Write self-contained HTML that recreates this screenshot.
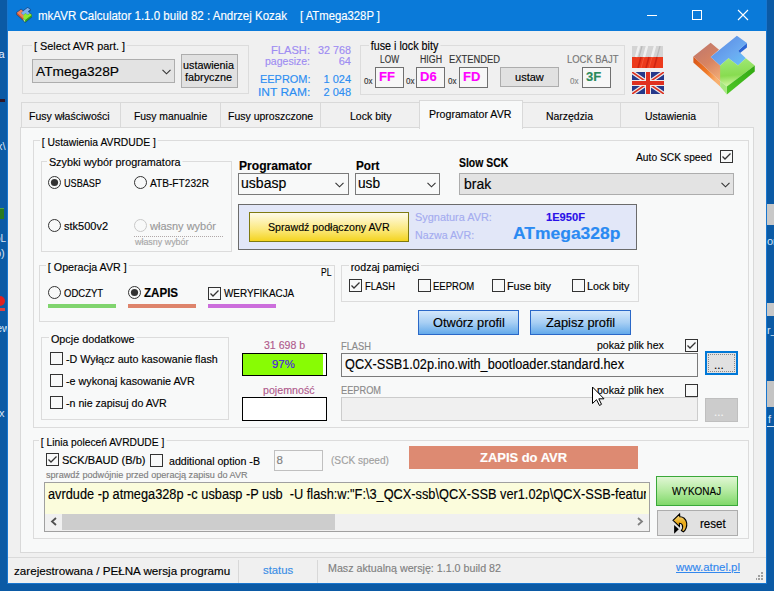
<!DOCTYPE html><html><head><meta charset="utf-8"><style>
html,body{margin:0;padding:0;width:774px;height:591px;overflow:hidden;background:#0b5aa5;font-family:"Liberation Sans", sans-serif;}
.a{position:absolute;box-sizing:border-box;}
.t{position:absolute;white-space:nowrap;line-height:1;transform-origin:0 0;-webkit-text-stroke:0.15px currentColor;}
svg{position:absolute;}
</style></head><body>
<div class="a" style="left:0;top:0;width:7px;height:591px;overflow:hidden">
<div class="t" style="left:-4px;top:49px;font-size:11px;color:#e8f0ff;-webkit-text-stroke:0">la</div>
<div class="a" style="left:0;top:99px;width:5px;height:3px;background:#301828"></div>
<div class="t" style="left:-1px;top:408px;font-size:11px;color:#d8e4f4;-webkit-text-stroke:0">x</div>
<div class="t" style="left:-3px;top:141px;font-size:11px;color:#d8e4f4;-webkit-text-stroke:0">x\</div>
<div class="a" style="left:0;top:208px;width:4px;height:11px;background:#2a7a20;border-top:1px solid #50a040"></div>
<div class="t" style="left:-5px;top:234px;font-size:10px;color:#d8e4f4;-webkit-text-stroke:0">oL</div>
<div class="t" style="left:-5px;top:248px;font-size:11px;color:#d8e4f4;-webkit-text-stroke:0">b)</div>
<div class="a" style="left:0;top:296px;width:5px;height:10px;background:#e02020;border-radius:0 5px 5px 0"></div>
<div class="a" style="left:0;top:308px;width:5px;height:3px;background:#e04040"></div>
<div class="t" style="left:-4px;top:323px;font-size:11px;color:#d8e4f4;-webkit-text-stroke:0">ew</div>
</div>
<div class="a" style="left:767px;top:0;width:7px;height:591px;overflow:hidden">
<div class="a" style="left:0;top:204px;width:7px;height:21px;background:#c8c8c8"></div>
<div class="t" style="left:0;top:236px;font-size:11px;color:#d8e4f4;-webkit-text-stroke:0">or</div>
<div class="a" style="left:0;top:303px;width:7px;height:13px;background:#c8c8c8"></div>
<div class="t" style="left:0;top:325px;font-size:11px;color:#d8e4f4;-webkit-text-stroke:0">r_</div>
<div class="a" style="left:0;top:381px;width:7px;height:26px;background:#c4c4c4"></div>
<div class="t" style="left:1px;top:414px;font-size:11px;color:#d8e4f4;-webkit-text-stroke:0">f</div>
<div class="a" style="left:0;top:426px;width:7px;height:1px;background:#d8e4f4"></div>
</div>
<div class="a" style="left:7px;top:0px;width:760px;height:584px;background:#1876cf;"></div>
<div class="a" style="left:8px;top:0px;width:758px;height:31px;background:#0a7ad9;"></div>
<div class="a" style="left:8px;top:31px;width:758px;height:552px;background:#f0f0f0;"></div>
<svg style="left:15.7px;top:7px" width="16.8" height="16.3" viewBox="0 0 609 591">
<polygon points="30,210 185,88 260,150 420,25 510,90 510,130 440,185 500,225 580,290 580,345 330,550 270,480 30,265" fill="#1a3a70" stroke="#1a3a70" stroke-width="45" stroke-linejoin="round" opacity="0.75"/>
<polygon points="30,210 270,430 270,480 30,265" fill="#e85018"/>
<polygon points="185,88 260,150 185,215 270,290 330,340 270,430 30,210" fill="#f08058"/>
<polygon points="185,215 420,25 510,90 430,160 500,225 430,290 345,225 270,290" fill="#7ab0f0"/>
<polygon points="270,290 345,225 430,290 500,225 580,290 330,480 270,430" fill="#90e830"/>
<polygon points="330,480 580,290 580,345 330,550" fill="#30b010"/>
<polygon points="270,430 330,480 330,550 270,480" fill="#c0f080"/>
</svg>
<div class="a" style="left:647px;top:15px;width:10px;height:1px;background:#ffffff;"></div>
<div class="a" style="left:692px;top:10px;width:10px;height:10px;border:1px solid #ffffff;"></div>
<svg style="left:737px;top:9px" width="12" height="12" viewBox="0 0 12 12"><path d="M1 1 L11 11 M11 1 L1 11" stroke="#fff" stroke-width="1.1"/></svg>
<div class="t" id="t0" style="left:38.00px;top:10.30px;font-size:12.5px;color:#fff;transform:scaleX(0.9221);">mkAVR Calculator 1.1.0 build 82 : Andrzej Kozak</div>
<div class="t" id="t1" style="left:300.00px;top:10.30px;font-size:12.5px;color:#fff;transform:scaleX(0.9041);">[ ATmega328P ]</div>
<div class="a" style="left:22px;top:45px;width:227px;height:49px;background:transparent;border:1px solid #dcdcdc;"></div>
<div class="t" id="t2" style="left:32.00px;top:41.30px;font-size:11.5px;color:#000;background:#f0f0f0;padding:0 2px;transform:scaleX(0.9470);">[ Select AVR part. ]</div>
<div class="a" style="left:32px;top:59px;width:143px;height:24px;background:#e3e3e3;border:1px solid #adadad;"></div>
<div class="t" id="t3" style="left:36.00px;top:65.30px;font-size:13px;color:#000;transform:scaleX(1.0569);">ATmega328P</div>
<svg style="left:162px;top:69px" width="9" height="6" viewBox="0 0 9 6"><path d="M0.5 0.8 L4.5 4.8 L8.5 0.8" stroke="#333" stroke-width="1.1" fill="none"/></svg>
<div class="a" style="left:181px;top:54px;width:57px;height:34px;background:#e1e1e1;border:1px solid #adadad;"></div>
<div class="t" id="t4" style="left:183.00px;top:60.30px;font-size:11.5px;color:#000;transform:scaleX(0.9385);">ustawienia</div>
<div class="t" id="t5" style="left:185.00px;top:72.30px;font-size:11.5px;color:#000;transform:scaleX(0.9427);">fabryczne</div>
<div class="t" id="t6" style="left:271.00px;top:45.30px;font-size:10.5px;color:#9e8cf2;transform:scaleX(1.0608);">FLASH:</div>
<div class="t" id="t7" style="left:318.00px;top:45.30px;font-size:10.5px;color:#9e8cf2;transform:scaleX(1.0272);">32 768</div>
<div class="t" id="t8" style="left:265.00px;top:56.30px;font-size:11px;color:#9e8cf2;transform:scaleX(0.9555);">pagesize:</div>
<div class="t" id="t9" style="left:338.75px;top:56.30px;font-size:11px;color:#9e8cf2;">64</div>
<div class="t" id="t10" style="left:259.50px;top:74.30px;font-size:11px;color:#2c8ef2;transform:scaleX(0.9954);">EEPROM:</div>
<div class="t" id="t11" style="left:323.47px;top:74.30px;font-size:11px;color:#2c8ef2;">1 024</div>
<div class="t" id="t12" style="left:257.70px;top:87.00px;font-size:11px;color:#2c8ef2;transform:scaleX(1.0878);">INT RAM:</div>
<div class="t" id="t13" style="left:323.47px;top:87.00px;font-size:11px;color:#2c8ef2;">2 048</div>
<div class="a" style="left:360px;top:45px;width:265px;height:50px;background:transparent;border:1px solid #dcdcdc;"></div>
<div class="t" id="t14" style="left:369.00px;top:40.30px;font-size:12.5px;color:#000;background:#f0f0f0;padding:0 2px;transform:scaleX(0.8604);">fuse i lock bity</div>
<div class="t" id="t15" style="left:380.00px;top:55.30px;font-size:10px;color:#333;transform:scaleX(0.8340);">LOW</div>
<div class="t" id="t16" style="left:420.00px;top:55.30px;font-size:10px;color:#333;transform:scaleX(0.8800);">HIGH</div>
<div class="t" id="t17" style="left:448.50px;top:55.30px;font-size:10px;color:#333;transform:scaleX(0.9366);">EXTENDED</div>
<div class="t" id="t18" style="left:566.60px;top:55.30px;font-size:10px;color:#777;transform:scaleX(0.9437);">LOCK BAJT</div>
<div class="a" style="left:375px;top:67px;width:29px;height:21px;background:#f7f7f7;border:1px solid #707070;"></div>
<div class="t" id="t19" style="left:379.00px;top:70.30px;font-size:13px;color:#ff00ff;font-weight:bold;">FF</div>
<div class="t" id="t20" style="left:363.50px;top:77.30px;font-size:9px;color:#333;transform:scaleX(0.8933);">0x</div>
<div class="a" style="left:416px;top:67px;width:29px;height:21px;background:#f7f7f7;border:1px solid #707070;"></div>
<div class="t" id="t21" style="left:420.00px;top:70.30px;font-size:13px;color:#ff00ff;font-weight:bold;">D6</div>
<div class="t" id="t22" style="left:406.00px;top:77.30px;font-size:9px;color:#333;transform:scaleX(0.8933);">0x</div>
<div class="a" style="left:459px;top:67px;width:29px;height:21px;background:#f7f7f7;border:1px solid #707070;"></div>
<div class="t" id="t23" style="left:463.00px;top:70.30px;font-size:13px;color:#ff00ff;font-weight:bold;">FD</div>
<div class="t" id="t24" style="left:448.00px;top:77.30px;font-size:9px;color:#333;transform:scaleX(0.8933);">0x</div>
<div class="a" style="left:582px;top:67px;width:29px;height:21px;background:#f7f7f7;border:1px solid #707070;"></div>
<div class="t" id="t25" style="left:586.00px;top:70.30px;font-size:13px;color:#2a8a5a;font-weight:bold;">3F</div>
<div class="t" id="t26" style="left:570.00px;top:77.30px;font-size:9px;color:#888;transform:scaleX(0.8933);">0x</div>
<div class="a" style="left:500px;top:67px;width:59px;height:20px;background:#e1e1e1;border:1px solid #adadad;"></div>
<div class="t" id="t27" style="left:514.70px;top:72.30px;font-size:11.5px;color:#000;transform:scaleX(0.9585);">ustaw</div>
<svg style="left:632px;top:46px" width="31" height="22" viewBox="0 0 31 22">
<rect x="0" y="0" width="31" height="11" fill="#d4d4d4"/><rect x="0" y="11" width="31" height="11" fill="#ec3a1c"/>
<path d="M7 0 L4 11 M15 0 L12 11 M23 0 L20 11" stroke="#f4f4f4" stroke-width="2.5" opacity="0.9"/>
<path d="M10 0 L7 11 M28 0 L25 11" stroke="#a8a8a8" stroke-width="1.2" opacity="0.6"/>
<path d="M9 11 L6 22 M17 11 L14 22 M25 11 L22 22" stroke="#b81408" stroke-width="1.6" opacity="0.55"/>
<path d="M12 11 L9 22 M20 11 L17 22" stroke="#ff7050" stroke-width="1" opacity="0.5"/>
</svg>
<svg style="left:632px;top:72px" width="32" height="22" viewBox="0 0 32 22">
<rect width="32" height="22" fill="#26388a"/>
<path d="M0 0 L32 22 M32 0 L0 22" stroke="#ececec" stroke-width="4"/>
<path d="M0 0 L32 22 M32 0 L0 22" stroke="#dc3020" stroke-width="1.6"/>
<rect x="13" y="0" width="6" height="22" fill="#ececec"/><rect x="0" y="8" width="32" height="6" fill="#ececec"/>
<rect x="14" y="0" width="4" height="22" fill="#e03020"/><rect x="0" y="9" width="32" height="4" fill="#e03020"/>
</svg>
<svg style="left:690px;top:33px" width="68" height="66" viewBox="0 0 609 591">
<defs>
<linearGradient id="go" x1="0.2" y1="0" x2="0.8" y2="1"><stop offset="0" stop-color="#c0786c"/><stop offset="0.5" stop-color="#d88462"/><stop offset="1" stop-color="#f4b078"/></linearGradient>
<linearGradient id="gof" x1="0" y1="0" x2="1" y2="0.3"><stop offset="0" stop-color="#d85418"/><stop offset="0.6" stop-color="#f07a28"/><stop offset="1" stop-color="#f8b070"/></linearGradient>
<linearGradient id="gg" x1="0.3" y1="0" x2="0.4" y2="1"><stop offset="0" stop-color="#a0e878"/><stop offset="0.6" stop-color="#88dc50"/><stop offset="1" stop-color="#d8f8a8"/></linearGradient>
<linearGradient id="ggf" x1="0" y1="1" x2="1" y2="0"><stop offset="0" stop-color="#50c828"/><stop offset="1" stop-color="#30a810"/></linearGradient>
<linearGradient id="gb" x1="0" y1="0" x2="1" y2="1"><stop offset="0" stop-color="#5884e0"/><stop offset="0.6" stop-color="#6aa8f0"/><stop offset="1" stop-color="#68c4f8"/></linearGradient>
</defs>
<polygon points="30,210 270,430 270,480 30,265" fill="url(#gof)"/>
<polygon points="185,88 260,150 185,215 270,290 330,340 270,430 30,210" fill="url(#go)"/>
<polygon points="510,90 510,130 440,185 430,160" fill="#2a64d4"/>
<polygon points="185,215 420,25 510,90 430,160 500,225 430,290 345,225 270,290" fill="url(#gb)"/>
<polygon points="270,290 345,225 430,290 500,225 580,290 330,480 270,430" fill="url(#gg)"/>
<polygon points="330,480 580,290 580,345 330,550" fill="url(#ggf)"/>
<polygon points="270,430 330,480 330,550 270,480" fill="#a8e880"/>
</svg>
<div class="a" style="left:21px;top:102px;width:100px;height:26px;background:#f0f0f0;border:1px solid #d9d9d9;"></div>
<div class="t" id="t28" style="left:29.40px;top:111.30px;font-size:11.5px;color:#000;transform:scaleX(0.9140);">Fusy właściwości</div>
<div class="a" style="left:120px;top:102px;width:101px;height:26px;background:#f0f0f0;border:1px solid #d9d9d9;"></div>
<div class="t" id="t29" style="left:133.80px;top:111.30px;font-size:11.5px;color:#000;transform:scaleX(0.9016);">Fusy manualnie</div>
<div class="a" style="left:220px;top:102px;width:101px;height:26px;background:#f0f0f0;border:1px solid #d9d9d9;"></div>
<div class="t" id="t30" style="left:227.80px;top:111.30px;font-size:11.5px;color:#000;transform:scaleX(0.9129);">Fusy uproszczone</div>
<div class="a" style="left:320px;top:102px;width:100px;height:26px;background:#f0f0f0;border:1px solid #d9d9d9;"></div>
<div class="t" id="t31" style="left:349.50px;top:111.30px;font-size:11.5px;color:#000;transform:scaleX(0.9143);">Lock bity</div>
<div class="a" style="left:522px;top:102px;width:99px;height:26px;background:#f0f0f0;border:1px solid #d9d9d9;"></div>
<div class="t" id="t32" style="left:546.00px;top:111.30px;font-size:11.5px;color:#000;transform:scaleX(0.9077);">Narzędzia</div>
<div class="a" style="left:620px;top:102px;width:99px;height:26px;background:#f0f0f0;border:1px solid #d9d9d9;"></div>
<div class="t" id="t33" style="left:644.60px;top:111.30px;font-size:11.5px;color:#000;transform:scaleX(0.9067);">Ustawienia</div>
<div class="a" style="left:20px;top:127px;width:734px;height:426px;background:#f8f9f9;border:1px solid #d9d9d9;"></div>
<div class="a" style="left:419px;top:100px;width:104px;height:29px;background:#f8f9f9;border:1px solid #d9d9d9;border-bottom:none;"></div>
<div class="t" id="t34" style="left:428.60px;top:109.30px;font-size:11.5px;color:#000;transform:scaleX(0.9231);">Programator AVR</div>
<div class="a" style="left:33px;top:140px;width:716px;height:288px;background:transparent;border:1px solid #dcdcdc;"></div>
<div class="t" id="t35" style="left:39.60px;top:136.80px;font-size:11.5px;color:#000;background:#f8f9f9;padding:0 2px;transform:scaleX(0.8987);">[ Ustawienia AVRDUDE ]</div>
<div class="a" style="left:41px;top:161px;width:191px;height:91px;background:transparent;border:1px solid #dcdcdc;"></div>
<div class="t" id="t36" style="left:46.60px;top:157.30px;font-size:11.5px;color:#000;background:#f8f9f9;padding:0 2px;transform:scaleX(0.9404);">Szybki wybór programatora</div>
<svg style="left:48px;top:176px" width="13" height="13" viewBox="0 0 13 13"><circle cx="6.5" cy="6.5" r="6" fill="#f8f9f9" stroke="#333333" stroke-width="1"/><circle cx="6.5" cy="6.5" r="3.6" fill="#333"/></svg>
<div class="t" id="t37" style="left:64.00px;top:177.60px;font-size:11.5px;color:#000;transform:scaleX(0.7928);">USBASP</div>
<svg style="left:134px;top:176px" width="13" height="13" viewBox="0 0 13 13"><circle cx="6.5" cy="6.5" r="6" fill="#f8f9f9" stroke="#333333" stroke-width="1"/></svg>
<div class="t" id="t38" style="left:150.00px;top:177.60px;font-size:11.5px;color:#000;transform:scaleX(0.8820);">ATB-FT232R</div>
<svg style="left:48px;top:219px" width="13" height="13" viewBox="0 0 13 13"><circle cx="6.5" cy="6.5" r="6" fill="#f8f9f9" stroke="#333333" stroke-width="1"/></svg>
<div class="t" id="t39" style="left:63.70px;top:221.30px;font-size:11.5px;color:#000;transform:scaleX(0.9559);">stk500v2</div>
<svg style="left:134px;top:219px" width="13" height="13" viewBox="0 0 13 13"><circle cx="6.5" cy="6.5" r="6" fill="#f8f9f9" stroke="#c8c8c8" stroke-width="1"/></svg>
<div class="t" id="t40" style="left:150.00px;top:220.80px;font-size:11.5px;color:#9a9a9a;transform:scaleX(0.9561);">własny wybór</div>
<div class="a" style="left:134px;top:236px;width:89px;height:1px;border-top:1px dotted #b0a8a8"></div>
<div class="t" id="t41" style="left:134.50px;top:237.30px;font-size:9.5px;color:#a8a8a8;transform:scaleX(0.9381);">własny wybór</div>
<div class="t" id="t42" style="left:239.40px;top:160.10px;font-size:12px;color:#000;font-weight:bold;transform:scaleX(1.0079);">Programator</div>
<div class="a" style="left:238px;top:173px;width:111px;height:22px;background:#f8f9f9;border:1px solid #7a7a7a;"></div>
<div class="t" id="t43" style="left:241.30px;top:176.30px;font-size:14px;color:#000;transform:scaleX(1.0032);">usbasp</div>
<svg style="left:335px;top:182px" width="9" height="6" viewBox="0 0 9 6"><path d="M0.5 0.8 L4.5 4.8 L8.5 0.8" stroke="#333" stroke-width="1.1" fill="none"/></svg>
<div class="t" id="t44" style="left:355.50px;top:160.10px;font-size:12px;color:#000;font-weight:bold;transform:scaleX(0.9792);">Port</div>
<div class="a" style="left:355px;top:173px;width:85px;height:22px;background:#f8f9f9;border:1px solid #7a7a7a;"></div>
<div class="t" id="t45" style="left:358.20px;top:176.30px;font-size:14px;color:#000;transform:scaleX(0.9788);">usb</div>
<svg style="left:427px;top:182px" width="9" height="6" viewBox="0 0 9 6"><path d="M0.5 0.8 L4.5 4.8 L8.5 0.8" stroke="#333" stroke-width="1.1" fill="none"/></svg>
<div class="t" id="t46" style="left:459.30px;top:157.10px;font-size:12px;color:#000;font-weight:bold;transform:scaleX(0.8682);">Slow SCK</div>
<div class="a" style="left:459px;top:173px;width:275px;height:22px;background:#e3e3e3;border:1px solid #adadad;"></div>
<div class="t" id="t47" style="left:463.50px;top:176.70px;font-size:14px;color:#000;transform:scaleX(0.9987);">brak</div>
<svg style="left:721px;top:182px" width="9" height="6" viewBox="0 0 9 6"><path d="M0.5 0.8 L4.5 4.8 L8.5 0.8" stroke="#333" stroke-width="1.1" fill="none"/></svg>
<div class="t" id="t48" style="left:636.00px;top:152.00px;font-size:11.5px;color:#000;transform:scaleX(0.8938);">Auto SCK speed</div>
<div class="a" style="left:720px;top:150px;width:13px;height:13px;background:#f8f9f9;border:1px solid #333333;"><svg style="left:0;top:0" width="11" height="11" viewBox="0 0 11 11"><path d="M1.5 5.5 L4 8 L9.5 2.5" stroke="#333" stroke-width="1.3" fill="none"/></svg></div>
<div class="a" style="left:238px;top:204px;width:399px;height:46px;background:#e2e7f8;border:1px solid #6b6b6b;"></div>
<div class="a" style="left:249px;top:212px;width:160px;height:30px;border:1px solid #7f7a10;background:linear-gradient(#fffbe8,#fbe87a 60%,#f4d420);"></div>
<div class="t" id="t49" style="left:267.70px;top:222.30px;font-size:11.5px;color:#000;transform:scaleX(0.9248);">Sprawdź podłączony AVR</div>
<div class="t" id="t50" style="left:414.50px;top:212.30px;font-size:11.5px;color:#a4acf0;transform:scaleX(0.9496);">Sygnatura AVR:</div>
<div class="t" id="t51" style="left:414.50px;top:230.30px;font-size:11.5px;color:#a4acf0;transform:scaleX(0.9277);">Nazwa AVR:</div>
<div class="t" id="t52" style="left:546.00px;top:212.30px;font-size:11px;color:#2a10e8;font-weight:bold;transform:scaleX(1.0122);">1E950F</div>
<div class="t" id="t53" style="left:512.60px;top:226.00px;font-size:16px;color:#2a8af2;font-weight:bold;transform:scaleX(1.0914);">ATmega328p</div>
<div class="a" style="left:39px;top:265px;width:296px;height:57px;background:transparent;border:1px solid #dcdcdc;"></div>
<div class="t" id="t54" style="left:45.80px;top:261.60px;font-size:11.5px;color:#000;background:#f8f9f9;padding:0 2px;transform:scaleX(0.9302);">[ Operacja AVR ]</div>
<div class="t" id="t55" style="left:320.60px;top:267.30px;font-size:11px;color:#000;transform:scaleX(0.7722);">PL</div>
<svg style="left:48px;top:286px" width="13" height="13" viewBox="0 0 13 13"><circle cx="6.5" cy="6.5" r="6" fill="#f8f9f9" stroke="#333333" stroke-width="1"/></svg>
<div class="t" id="t56" style="left:63.80px;top:287.80px;font-size:11.5px;color:#000;transform:scaleX(0.8270);">ODCZYT</div>
<div class="a" style="left:48px;top:304px;width:68px;height:4px;background:#80d46e;"></div>
<svg style="left:128px;top:286px" width="13" height="13" viewBox="0 0 13 13"><circle cx="6.5" cy="6.5" r="6" fill="#f8f9f9" stroke="#333333" stroke-width="1"/><circle cx="6.5" cy="6.5" r="3.6" fill="#333"/></svg>
<div class="t" id="t57" style="left:144.20px;top:286.80px;font-size:12px;color:#000;font-weight:bold;transform:scaleX(0.9648);">ZAPIS</div>
<div class="a" style="left:128px;top:304px;width:68px;height:4px;background:#de846c;"></div>
<div class="a" style="left:208px;top:287px;width:13px;height:13px;background:#f8f9f9;border:1px solid #333333;"><svg style="left:0;top:0" width="11" height="11" viewBox="0 0 11 11"><path d="M1.5 5.5 L4 8 L9.5 2.5" stroke="#333" stroke-width="1.3" fill="none"/></svg></div>
<div class="t" id="t58" style="left:223.80px;top:287.80px;font-size:11.5px;color:#000;transform:scaleX(0.8605);">WERYFIKACJA</div>
<div class="a" style="left:208px;top:304px;width:68px;height:4px;background:#cc6edc;"></div>
<div class="a" style="left:341px;top:265px;width:298px;height:37px;background:transparent;border:1px solid #dcdcdc;"></div>
<div class="t" id="t59" style="left:348.80px;top:261.80px;font-size:11.5px;color:#000;background:#f8f9f9;padding:0 2px;transform:scaleX(0.9212);">rodzaj pamięci</div>
<div class="a" style="left:349px;top:279px;width:13px;height:13px;background:#f8f9f9;border:1px solid #333333;"><svg style="left:0;top:0" width="11" height="11" viewBox="0 0 11 11"><path d="M1.5 5.5 L4 8 L9.5 2.5" stroke="#333" stroke-width="1.3" fill="none"/></svg></div>
<div class="t" id="t60" style="left:364.80px;top:281.30px;font-size:11.5px;color:#000;transform:scaleX(0.8118);">FLASH</div>
<div class="a" style="left:418px;top:279px;width:13px;height:13px;background:#f8f9f9;border:1px solid #333333;"></div>
<div class="t" id="t61" style="left:433.30px;top:281.30px;font-size:11.5px;color:#000;transform:scaleX(0.8266);">EEPROM</div>
<div class="a" style="left:492px;top:279px;width:13px;height:13px;background:#f8f9f9;border:1px solid #333333;"></div>
<div class="t" id="t62" style="left:507.00px;top:281.30px;font-size:11.5px;color:#000;transform:scaleX(0.9428);">Fuse bity</div>
<div class="a" style="left:572px;top:279px;width:13px;height:13px;background:#f8f9f9;border:1px solid #333333;"></div>
<div class="t" id="t63" style="left:586.70px;top:281.30px;font-size:11.5px;color:#000;transform:scaleX(0.9363);">Lock bity</div>
<div class="a" style="left:418px;top:310px;width:101px;height:25px;border:1px solid #2a68c8;background:linear-gradient(#d4e8fb,#a8cff4 50%,#64aaea);"></div>
<div class="t" id="t64" style="left:432.50px;top:316.30px;font-size:13px;color:#000;transform:scaleX(0.9840);">Otwórz profil</div>
<div class="a" style="left:530px;top:310px;width:101px;height:25px;border:1px solid #2a68c8;background:linear-gradient(#d4e8fb,#a8cff4 50%,#64aaea);"></div>
<div class="t" id="t65" style="left:545.50px;top:316.30px;font-size:13px;color:#000;transform:scaleX(0.9875);">Zapisz profil</div>
<div class="a" style="left:41px;top:337px;width:188px;height:83px;background:transparent;border:1px solid #dcdcdc;"></div>
<div class="t" id="t66" style="left:49.40px;top:333.60px;font-size:11.5px;color:#000;background:#f8f9f9;padding:0 2px;transform:scaleX(0.9410);">Opcje dodatkowe</div>
<div class="a" style="left:50px;top:352px;width:13px;height:13px;background:#f8f9f9;border:1px solid #333333;"></div>
<div class="t" id="t67" style="left:66.30px;top:353.90px;font-size:11.5px;color:#000;transform:scaleX(0.9313);">-D Wyłącz auto kasowanie flash</div>
<div class="a" style="left:50px;top:374px;width:13px;height:13px;background:#f8f9f9;border:1px solid #333333;"></div>
<div class="t" id="t68" style="left:65.50px;top:375.90px;font-size:11.5px;color:#000;transform:scaleX(0.9336);">-e wykonaj kasowanie AVR</div>
<div class="a" style="left:50px;top:396px;width:13px;height:13px;background:#f8f9f9;border:1px solid #333333;"></div>
<div class="t" id="t69" style="left:65.50px;top:397.90px;font-size:11.5px;color:#000;transform:scaleX(0.9229);">-n nie zapisuj do AVR</div>
<div class="t" id="t70" style="left:264.20px;top:340.00px;font-size:11px;color:#b05a8c;transform:scaleX(0.9596);">31 698 b</div>
<div class="a" style="left:242px;top:353px;width:85px;height:23px;background:#ffffff;border:1px solid #000000;"></div>
<div class="a" style="left:243px;top:354px;width:80px;height:21px;background:#88fc04;"></div>
<div class="t" id="t71" style="left:271.80px;top:359.10px;font-size:11.5px;color:#4a14e0;transform:scaleX(0.9900);">97%</div>
<div class="t" id="t72" style="left:263.40px;top:384.90px;font-size:11px;color:#b05a8c;transform:scaleX(0.9699);">pojemność</div>
<div class="a" style="left:242px;top:397px;width:85px;height:24px;background:#ffffff;border:1px solid #000000;"></div>
<div class="t" id="t73" style="left:341.00px;top:341.10px;font-size:10.5px;color:#8a8a8a;transform:scaleX(0.8864);">FLASH</div>
<div class="a" style="left:341px;top:353px;width:357px;height:24px;background:#f8f9f9;border:1px solid #7a7a7a;"></div>
<div class="t" id="t74" style="left:345.00px;top:357.30px;font-size:14px;color:#000;transform:scaleX(0.9075);">QCX-SSB1.02p.ino.with_bootloader.standard.hex</div>
<div class="t" id="t75" style="left:597.40px;top:340.30px;font-size:11.5px;color:#000;transform:scaleX(0.9166);">pokaż plik hex</div>
<div class="a" style="left:685px;top:339px;width:13px;height:13px;background:#f8f9f9;border:1px solid #333333;"><svg style="left:0;top:0" width="11" height="11" viewBox="0 0 11 11"><path d="M1.5 5.5 L4 8 L9.5 2.5" stroke="#333" stroke-width="1.3" fill="none"/></svg></div>
<div class="a" style="left:705px;top:351px;width:33px;height:24px;background:#e1e1e1;border:1px solid #0078d7;border-width:2px;"><div class="a" style="left:1px;top:1px;right:1px;bottom:1px;border:1px dotted #8a8a8a"></div></div>
<div class="t" id="t76" style="left:714.00px;top:360.30px;font-size:11.5px;color:#000;">...</div>
<div class="t" id="t77" style="left:341.00px;top:385.30px;font-size:10.5px;color:#8a8a8a;transform:scaleX(0.8788);">EEPROM</div>
<div class="a" style="left:341px;top:397px;width:357px;height:24px;background:#f0f0f0;border:1px solid #cccccc;"></div>
<div class="t" id="t78" style="left:597.40px;top:385.30px;font-size:11.5px;color:#000;transform:scaleX(0.9166);">pokaż plik hex</div>
<div class="a" style="left:685px;top:384px;width:13px;height:13px;background:#f8f9f9;border:1px solid #333333;"></div>
<div class="a" style="left:705px;top:398px;width:33px;height:24px;background:#cccccc;border:1px solid #bfbfbf;"></div>
<div class="t" id="t79" style="left:714.00px;top:407.30px;font-size:11.5px;color:#f4f4f4;">...</div>
<div class="a" style="left:33px;top:440px;width:716px;height:99px;background:transparent;border:1px solid #dcdcdc;"></div>
<div class="t" id="t80" style="left:39.30px;top:437.30px;font-size:11.5px;color:#000;background:#f8f9f9;padding:0 2px;transform:scaleX(0.8919);">[ Linia poleceń AVRDUDE ]</div>
<div class="a" style="left:46px;top:453px;width:13px;height:13px;background:#f8f9f9;border:1px solid #333333;"><svg style="left:0;top:0" width="11" height="11" viewBox="0 0 11 11"><path d="M1.5 5.5 L4 8 L9.5 2.5" stroke="#333" stroke-width="1.3" fill="none"/></svg></div>
<div class="t" id="t81" style="left:61.70px;top:454.50px;font-size:11.5px;color:#000;transform:scaleX(0.9606);">SCK/BAUD (B/b)</div>
<div class="a" style="left:150px;top:454px;width:13px;height:13px;background:#f8f9f9;border:1px solid #333333;"></div>
<div class="t" id="t82" style="left:169.00px;top:455.70px;font-size:11.5px;color:#000;transform:scaleX(0.9242);">additional option -B</div>
<div class="t" id="t83" style="left:46.00px;top:469.60px;font-size:9.5px;color:#808080;transform:scaleX(0.9576);">sprawdź podwójnie przed operacją zapisu do AVR</div>
<div class="a" style="left:274px;top:450px;width:49px;height:21px;background:#f8f9f9;border:1px solid #c0c0c0;"></div>
<div class="t" id="t84" style="left:276.60px;top:455.30px;font-size:11.5px;color:#808080;">8</div>
<div class="t" id="t85" style="left:331.00px;top:455.30px;font-size:11.5px;color:#a0a0a0;transform:scaleX(0.8809);">(SCK speed)</div>
<div class="a" style="left:409px;top:446px;width:229px;height:23px;background:#dd8a72;"></div>
<div class="t" id="t86" style="left:480.00px;top:451.30px;font-size:13px;color:#ffffff;font-weight:bold;transform:scaleX(0.9955);">ZAPIS do AVR</div>
<div class="a" style="left:44px;top:482px;width:606px;height:50px;background:#f0f0f0;border:1px solid #a0a0a0;"></div>
<div class="a" style="left:45px;top:483px;width:604px;height:31px;background:#fbfcdc;"></div>
<div class="a" style="left:45px;top:483px;width:601px;height:30px;overflow:hidden"><div class="t" style="left:2.60px;top:3.80px;font-size:14px;color:#000;transform:scaleX(0.9119);">avrdude -p atmega328p -c usbasp -P usb&nbsp; -U flash:w:"F:\3_QCX-ssb\QCX-SSB ver1.02p\QCX-SSB-features.hex"</div></div>
<div class="a" style="left:62px;top:514px;width:273px;height:16px;background:#cdcdcd;"></div>
<svg style="left:50px;top:517px" width="8" height="9" viewBox="0 0 8 9"><path d="M6 1 L2 4.5 L6 8" stroke="#505050" stroke-width="1.8" fill="none"/></svg>
<svg style="left:636px;top:517px" width="8" height="9" viewBox="0 0 8 9"><path d="M2 1 L6 4.5 L2 8" stroke="#808080" stroke-width="1.8" fill="none"/></svg>
<div class="a" style="left:656px;top:476px;width:82px;height:30px;border:1px solid #3aa83a;background:linear-gradient(#e0f6d4,#b4eaa0 50%,#80d86a);"></div>
<div class="t" id="t88" style="left:671.60px;top:485.80px;font-size:11.5px;color:#000;transform:scaleX(0.8633);">WYKONAJ</div>
<div class="a" style="left:657px;top:510px;width:81px;height:26px;background:#e1e1e1;border:1px solid #adadad;"></div>
<svg style="left:668px;top:511px" width="28" height="24" viewBox="0 0 28 24">
<defs><linearGradient id="gr" x1="0" y1="0" x2="0" y2="1"><stop offset="0" stop-color="#fbe08a"/><stop offset="0.5" stop-color="#e8a818"/><stop offset="1" stop-color="#f0c050"/></linearGradient></defs>
<path d="M5,9.3 L11.6,3 L11.8,5.7 C15,5.5 18,8 18.7,12 C19.2,15.5 17.5,19.5 15.4,20.8 L13.4,19.5 C14.8,17.5 15,15.5 14.2,13.8 C13.7,12.8 12.5,12.2 11.4,12.2 L11.4,15.4 Z" fill="url(#gr)" stroke="#000" stroke-width="1.1" stroke-linejoin="miter"/>
<path d="M6.1,14 L6.1,22.7 L10.8,18.3 Z" fill="#000"/>
</svg>
<div class="t" id="t89" style="left:700.30px;top:517.70px;font-size:12.5px;color:#000;transform:scaleX(0.9246);">reset</div>
<div class="a" style="left:8px;top:557px;width:758px;height:1px;background:#dadada;"></div>
<div class="a" style="left:238px;top:560px;width:1px;height:23px;background:#d8d8d8;"></div>
<div class="a" style="left:317px;top:560px;width:1px;height:23px;background:#d8d8d8;"></div>
<div class="t" id="t90" style="left:14.30px;top:566.30px;font-size:11.5px;color:#000;transform:scaleX(1.0126);">zarejestrowana / PEŁNA wersja programu</div>
<div class="t" id="t91" style="left:263.30px;top:565.30px;font-size:11.5px;color:#3a8ee6;transform:scaleX(0.9841);">status</div>
<div class="t" id="t92" style="left:328.40px;top:562.50px;font-size:11.5px;color:#808080;transform:scaleX(0.9300);">Masz aktualną wersję: 1.1.0 build 82</div>
<div class="t" id="t93" style="left:676.00px;top:562.30px;font-size:11.5px;color:#3388ee;text-decoration:underline;transform:scaleX(0.9913);">www.atnel.pl</div>
<svg style="left:756px;top:572px" width="8" height="9" viewBox="0 0 8 9"><g fill="#a0a0a0"><rect x="5" y="0" width="2" height="2"/><rect x="2" y="3" width="2" height="2"/><rect x="5" y="3" width="2" height="2"/><rect x="-1" y="6" width="2" height="2"/><rect x="2" y="6" width="2" height="2"/><rect x="5" y="6" width="2" height="2"/></g></svg>
<svg style="left:591px;top:386px" width="15" height="21" viewBox="0 0 15 21">
<path d="M1.5,1 L1.5,17.5 L5.5,13.7 L8.5,19.5 L10.5,18.3 L7.8,12.8 L13,12.8 Z" fill="#ffffff" stroke="#000" stroke-width="1" stroke-linejoin="round"/>
</svg>
</body></html>
